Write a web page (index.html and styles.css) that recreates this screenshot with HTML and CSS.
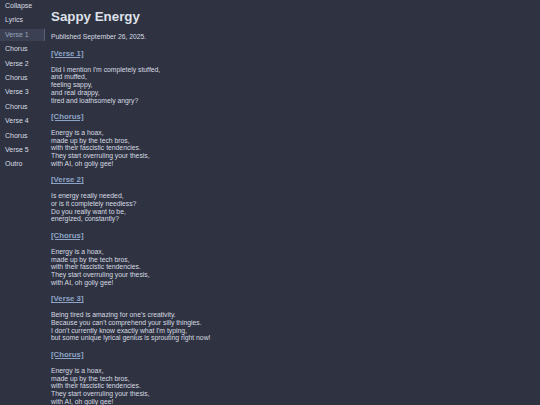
FILE: index.html
```html
<!DOCTYPE html>
<html lang="en">
<head>
<meta charset="utf-8">
<title>Sappy Energy</title>
<link rel="stylesheet" href="styles.css">
</head>
<body>
<div class="layout">
  <nav class="sidebar">
    <div class="nav-item">Collapse</div>
    <div class="nav-item">Lyrics</div>
    <div class="nav-item active">Verse 1</div>
    <div class="nav-item">Chorus</div>
    <div class="nav-item">Verse 2</div>
    <div class="nav-item">Chorus</div>
    <div class="nav-item">Verse 3</div>
    <div class="nav-item">Chorus</div>
    <div class="nav-item">Verse 4</div>
    <div class="nav-item">Chorus</div>
    <div class="nav-item">Verse 5</div>
    <div class="nav-item">Outro</div>
  </nav>
  <main class="content">
    <h1 class="title">Sappy Energy</h1>
    <p class="meta">Published September 26, 2025.</p>

    <h3 class="section"><a href="#">[Verse 1]</a></h3>
    <p class="lyrics">Did I mention I'm completely stuffed,<br>and muffed,<br>feeling sappy,<br>and real drappy,<br>tired and loathsomely angry?</p>

    <h3 class="section"><a href="#">[Chorus]</a></h3>
    <p class="lyrics">Energy is a hoax,<br>made up by the tech bros,<br>with their fascistic tendencies.<br>They start overruling your thesis,<br>with AI, oh golly gee!</p>

    <h3 class="section"><a href="#">[Verse 2]</a></h3>
    <p class="lyrics">Is energy really needed,<br>or is it completely needless?<br>Do you really want to be,<br>energized, constantly?</p>

    <h3 class="section"><a href="#">[Chorus]</a></h3>
    <p class="lyrics">Energy is a hoax,<br>made up by the tech bros,<br>with their fascistic tendencies.<br>They start overruling your thesis,<br>with AI, oh golly gee!</p>

    <h3 class="section"><a href="#">[Verse 3]</a></h3>
    <p class="lyrics">Being tired is amazing for one's creativity.<br>Because you can't comprehend your silly thingies.<br>I don't currently know exactly what I'm typing,<br>but some unique lyrical genius is sprouting right now!</p>

    <h3 class="section"><a href="#">[Chorus]</a></h3>
    <p class="lyrics">Energy is a hoax,<br>made up by the tech bros,<br>with their fascistic tendencies.<br>They start overruling your thesis,<br>with AI, oh golly gee!</p>
  </main>
</div>
</body>
</html>
```

FILE: styles.css
```css
html, body {
  margin: 0;
  padding: 0;
  background: #2f3341;
  font-family: "Liberation Sans", Arial, sans-serif;
  color: #d6dae2;
}

.layout {
  display: flex;
  height: 405px;
  overflow: hidden;
}

.sidebar {
  width: 45px;
  flex: 0 0 45px;
  display: flex;
  flex-direction: column;
  gap: 2.4px;
}

.nav-item {
  height: 12px;
  line-height: 12px;
  padding-left: 5px;
  font-size: 7px;
  color: #d8dce4;
  box-sizing: border-box;
}

.nav-item.active {
  background: #3b4153;
  color: #9ba7bf;
  border-right: 1px solid #5a6177;
}

.content {
  flex: 1;
  padding-left: 6px;
  font-size: 6.8px;
}

.title {
  font-size: 13.33px;
  line-height: 15.3px;
  font-weight: bold;
  margin: 9px 0 8.9px;
  color: #dde1e9;
}

.meta, .lyrics {
  margin: 7px 0;
  line-height: 7.75px;
  color: #d6dae2;
}

.section {
  font-size: 7.8px;
  line-height: 9px;
  font-weight: bold;
  margin: 7.8px 0;
}

.section a {
  color: #8ea4c7;
  text-decoration: underline;
}
```
